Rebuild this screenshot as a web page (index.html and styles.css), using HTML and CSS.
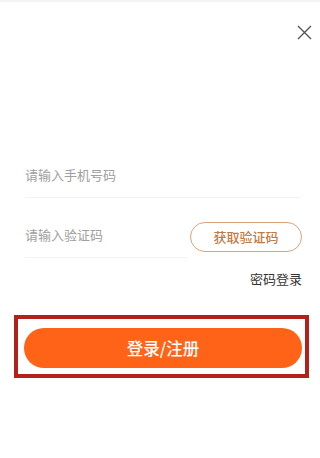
FILE: index.html
```html
<!DOCTYPE html>
<html lang="zh-CN">
<head>
  <meta charset="UTF-8" />
  <title>登录</title>
  <link rel="stylesheet" href="styles.css">
</head>
<body>
  <div class="topbar">
    <button class="close" aria-label="关闭">
      <svg width="15" height="15" viewBox="0 0 15 15">
        <path d="M1 1 L14 14 M14 1 L1 14" stroke="#555" stroke-width="1.4" fill="none" />
      </svg>
    </button>
  </div>

  <div class="form">
    <div class="field phone">
      <input type="tel" placeholder="请输入手机号码" />
    </div>

    <div class="code-row">
      <div class="field code">
        <input type="text" placeholder="请输入验证码" />
      </div>
      <button class="get-code">获取验证码</button>
    </div>

    <div class="alt-login">
      <a href="#">密码登录</a>
    </div>
  </div>

  <div class="submit-box">
    <button class="submit">登录/注册</button>
  </div>
</body>
</html>
```

FILE: styles.css
```css
body { margin: 0; background: #fff; font-family: "Noto Sans CJK SC", "Noto Sans", sans-serif; border-top: 2px solid #f4f4f4; }

.topbar { display: flex; justify-content: flex-end; padding: 23px 8px 0 0; height: 108px; }
.close { background: none; border: 0; padding: 0; width: 15px; height: 15px; display: flex; }

.form { padding: 24px 18px 0 25px; }
.field { box-sizing: border-box; height: 41px; padding-bottom: 5px; display: flex; align-items: center; border-bottom: 1px solid #f3f3f3; }
.phone { margin-right: 2px; }
.field input { border: 0; outline: none; padding: 0; font-family: inherit; font-size: 13px; color: #333; width: 100%; background: transparent; }
.field input::placeholder { color: #a0a0a0; }

.code-row { display: flex; align-items: center; margin-top: 19px; }
.code { flex: 1; margin-right: 2px; }
.get-code { width: 112px; height: 30px; border: 1px solid #d9a27a; border-radius: 15px; background: #fff; color: #c27a45; font-family: inherit; font-size: 13px; font-weight: 500; padding: 0; margin-top: -2px; }

.alt-login { text-align: right; margin-top: 10px; line-height: 18px; }
.alt-login a { color: #333; font-size: 13px; text-decoration: none; }

.submit-box { box-sizing: border-box; margin: 27px 11px 0 14px; border: 4px solid #b3211b; height: 63px; padding: 9px 0 0 6px; }
.submit { width: 278px; height: 40px; border: 0; border-radius: 20px; background: #ff6317; color: #fff; font-family: inherit; font-size: 16.5px; font-weight: 500; padding: 0; }
```
